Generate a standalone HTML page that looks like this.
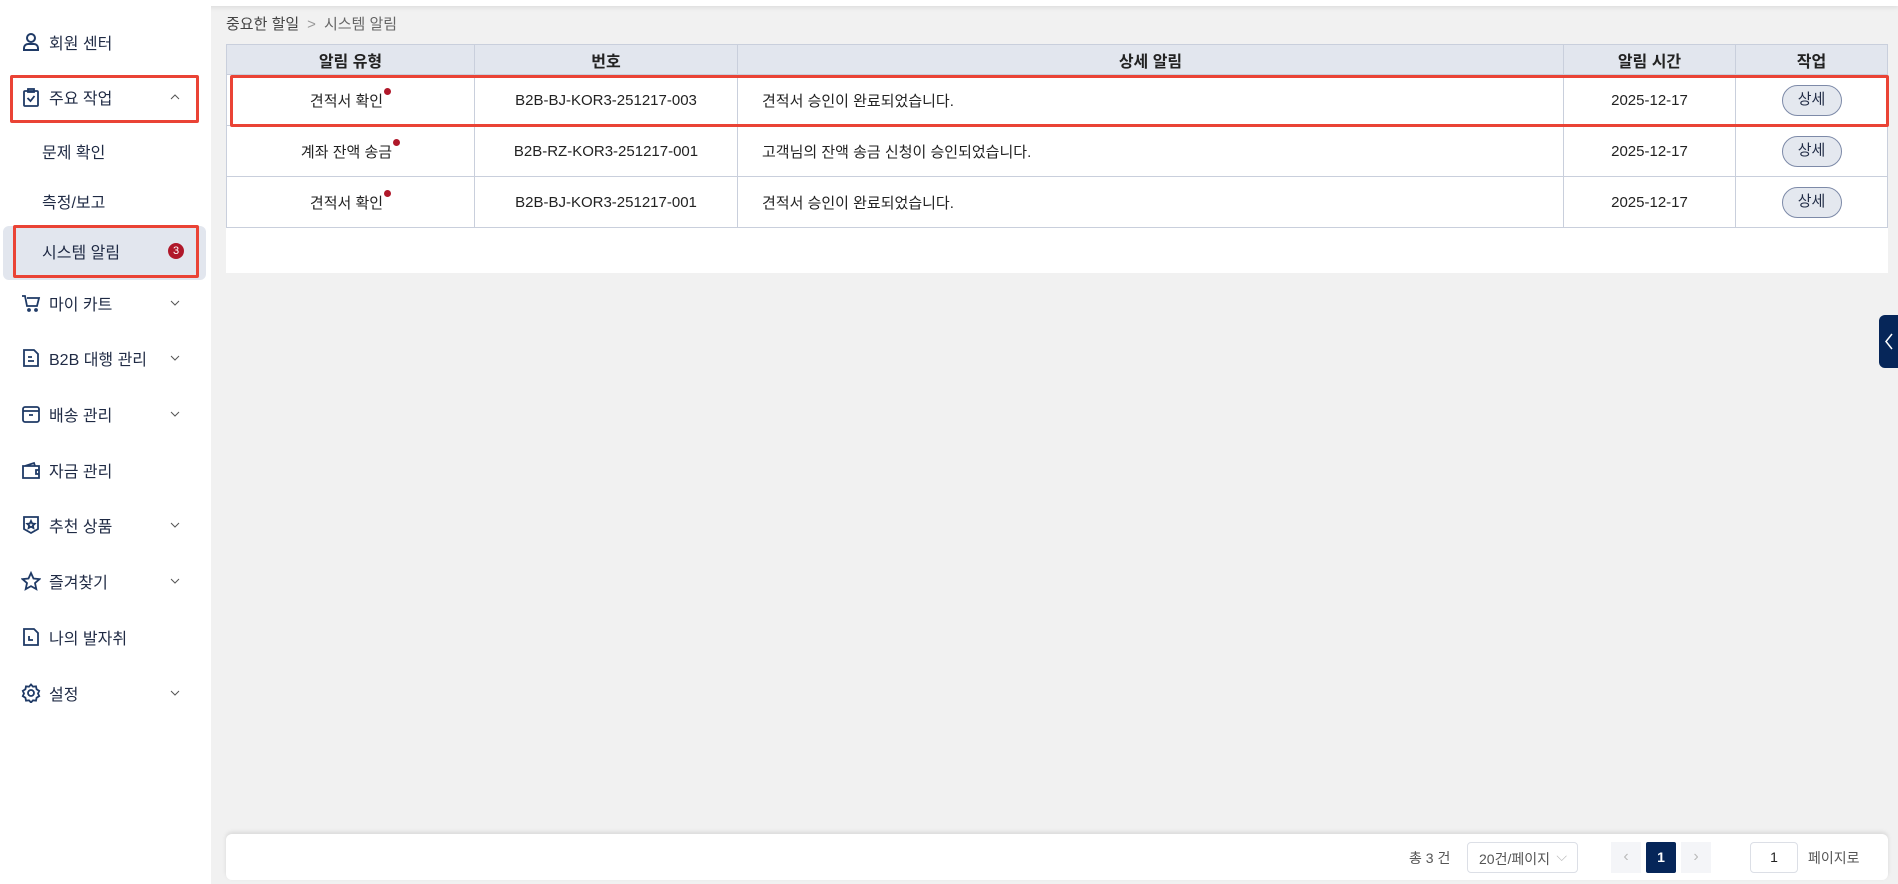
<!DOCTYPE html>
<html><head><meta charset="utf-8"><style>
*{margin:0;padding:0;box-sizing:border-box}
body{width:1898px;height:884px;overflow:hidden;background:#f1f1f1;font-family:"Liberation Sans","Noto Sans CJK KR",sans-serif;color:#222;position:relative;font-size:16px}
.top{position:absolute;left:0;top:0;width:1898px;height:6px;background:#fff;box-shadow:0 2px 4px rgba(0,0,0,.08)}
.side{position:absolute;left:0;top:6px;width:211px;height:878px;background:#fff}
.it{position:absolute;left:0;width:211px;height:40px;display:flex;align-items:center;font-size:16px;color:#1f2a44}
.it svg{position:absolute;left:21px;width:20px;height:20px}
.it .t{position:absolute;left:49px}
.it .ch{position:absolute;left:170px;width:10px;height:10px}
.sub .t{left:42px}
.box{position:absolute;border:3px solid #ea4335;border-radius:2px}
.bc{position:absolute;left:226px;top:13px;font-size:15px;color:#444}
.bc span{color:#999;margin:0 8px}
.bc b{font-weight:normal;color:#666}
.tbl{position:absolute;left:226px;top:44px;width:1662px;height:229px;background:#fff}
table{border-collapse:collapse;width:1662px;font-size:15px}
th{background:#e2e6ee;height:30px;font-weight:bold;border:1px solid #c9cfdc;font-size:16px}
td{height:51px;border:1px solid #c9cfdc;text-align:center;color:#222}
td.l{text-align:left;padding-left:24px}
.dot{display:inline-block;width:7px;height:7px;border-radius:50%;background:#b0182a;vertical-align:top;margin-top:-2px;margin-left:1px}
.btn{display:inline-block;width:60px;height:31px;border:1px solid #7d8aa8;border-radius:16px;background:#e4e8ef;line-height:28px;font-size:15px;color:#1f2a44}
.foot{position:absolute;left:226px;top:834px;width:1662px;height:46px;background:#fff;border-radius:6px;box-shadow:0 -2px 4px rgba(0,0,0,.1)}
.tab{position:absolute;left:1879px;top:315px;width:19px;height:53px;background:#062659;border-radius:6px 0 0 6px}
</style></head><body>
<div class="top"></div>
<div class="side">
<div class="it" style="top:16px"><svg viewBox="0 0 20 20" fill="none" stroke="#1f3a66" stroke-width="2"><circle cx="10" cy="6" r="4"/><path d="M3 18v-2a4 4 0 0 1 4-4h6a4 4 0 0 1 4 4v2z"/></svg><span class="t">회원 센터</span></div>
<div class="it" style="top:71px"><svg viewBox="0 0 20 20" fill="none" stroke="#1f3a66" stroke-width="1.8"><rect x="3" y="4" width="14" height="15" rx="1"/><rect x="7" y="2" width="6" height="3"/><path d="M6.5 11l3 3 4-5"/></svg><span class="t">주요 작업</span><svg class="ch" viewBox="0 0 10 10" fill="none" stroke="#555"><path d="M1 7l4-4 4 4"/></svg></div>
<div class="it sub" style="top:125px"><span class="t">문제 확인</span></div>
<div class="it sub" style="top:175px"><span class="t">측정/보고</span></div>
<div style="position:absolute;left:3px;top:220px;width:203px;height:54px;background:#e2e6ee;border-radius:6px"></div>
<div class="it sub" style="top:225px"><span class="t">시스템 알림</span><span style="position:absolute;left:168px;width:16px;height:16px;border-radius:50%;background:#b0182a;color:#fff;font-size:11px;text-align:center;line-height:16px">3</span></div>
<div class="it" style="top:277px"><svg viewBox="0 0 20 20" fill="none" stroke="#1f3a66" stroke-width="1.8"><path d="M1 3h3l2 10h10l2-8H6"/><circle cx="8" cy="17" r="1"/><circle cx="15" cy="17" r="1"/></svg><span class="t">마이 카트</span><svg class="ch" viewBox="0 0 10 10" fill="none" stroke="#555"><path d="M1 3l4 4 4-4"/></svg></div>
<div class="it" style="top:332px"><svg viewBox="0 0 20 20" fill="none" stroke="#1f3a66" stroke-width="1.8"><path d="M3 2h10l4 4v12H3z"/><path d="M7 9h4M7 13h6"/></svg><span class="t">B2B 대행 관리</span><svg class="ch" viewBox="0 0 10 10" fill="none" stroke="#555"><path d="M1 3l4 4 4-4"/></svg></div>
<div class="it" style="top:388px"><svg viewBox="0 0 20 20" fill="none" stroke="#1f3a66" stroke-width="1.8"><rect x="2" y="3" width="16" height="15" rx="2"/><path d="M2 7h16M8 11h4"/></svg><span class="t">배송 관리</span><svg class="ch" viewBox="0 0 10 10" fill="none" stroke="#555"><path d="M1 3l4 4 4-4"/></svg></div>
<div class="it" style="top:444px"><svg viewBox="0 0 20 20" fill="none" stroke="#1f3a66" stroke-width="1.8"><path d="M2 6h16v12H2zM4 6l9-3 1 3"/><path d="M18 10h-3v4h3"/></svg><span class="t">자금 관리</span></div>
<div class="it" style="top:499px"><svg viewBox="0 0 20 20" fill="none" stroke="#1f3a66" stroke-width="1.8"><path d="M3 2h14v12l-7 4-7-4z"/><path d="M10 6l1.2 2.5 2.5.3-1.8 1.7.5 2.5-2.4-1.3-2.4 1.3.5-2.5-1.8-1.7 2.5-.3z"/></svg><span class="t">추천 상품</span><svg class="ch" viewBox="0 0 10 10" fill="none" stroke="#555"><path d="M1 3l4 4 4-4"/></svg></div>
<div class="it" style="top:555px"><svg viewBox="0 0 20 20" fill="none" stroke="#1f3a66" stroke-width="1.8"><path d="M10 2l2.5 5.5 6 .6-4.5 4 1.3 6-5.3-3-5.3 3 1.3-6-4.5-4 6-.6z"/></svg><span class="t">즐겨찾기</span><svg class="ch" viewBox="0 0 10 10" fill="none" stroke="#555"><path d="M1 3l4 4 4-4"/></svg></div>
<div class="it" style="top:611px"><svg viewBox="0 0 20 20" fill="none" stroke="#1f3a66" stroke-width="1.8"><path d="M3 2h10l4 4v12H3z"/><path d="M8 9v4h4"/></svg><span class="t">나의 발자취</span></div>
<div class="it" style="top:667px"><svg viewBox="0 0 20 20" fill="none" stroke="#1f3a66" stroke-width="1.8"><circle cx="10" cy="10" r="3"/><path d="M10 1.5l2 2.2 3-.3.6 2.9 2.6 1.6-1.2 2.6 1.2 2.6-2.6 1.6-.6 2.9-3-.3-2 2.2-2-2.2-3 .3-.6-2.9-2.6-1.6 1.2-2.6-1.2-2.6 2.6-1.6.6-2.9 3 .3z"/></svg><span class="t">설정</span><svg class="ch" viewBox="0 0 10 10" fill="none" stroke="#555"><path d="M1 3l4 4 4-4"/></svg></div>
</div>
<div class="box" style="left:10px;top:75px;width:189px;height:48px"></div>
<div class="box" style="left:13px;top:225px;width:186px;height:53px"></div>
<div class="bc">중요한 할일<span>&gt;</span><b>시스템 알림</b></div>
<div class="tbl"><table>
<tr><th style="width:248px">알림 유형</th><th style="width:263px">번호</th><th style="width:826px">상세 알림</th><th style="width:172px">알림 시간</th><th>작업</th></tr>
<tr><td>견적서 확인<span class="dot"></span></td><td>B2B-BJ-KOR3-251217-003</td><td class="l">견적서 승인이 완료되었습니다.</td><td>2025-12-17</td><td><span class="btn">상세</span></td></tr>
<tr><td>계좌 잔액 송금<span class="dot"></span></td><td>B2B-RZ-KOR3-251217-001</td><td class="l">고객님의 잔액 송금 신청이 승인되었습니다.</td><td>2025-12-17</td><td><span class="btn">상세</span></td></tr>
<tr><td>견적서 확인<span class="dot"></span></td><td>B2B-BJ-KOR3-251217-001</td><td class="l">견적서 승인이 완료되었습니다.</td><td>2025-12-17</td><td><span class="btn">상세</span></td></tr>
</table></div>
<div class="box" style="left:230px;top:75px;width:1659px;height:52px"></div>
<div class="foot">
<span style="position:absolute;left:1183px;top:14px;font-size:14px;color:#555">총 3 건</span>
<div style="position:absolute;left:1241px;top:8px;width:111px;height:31px;border:1px solid #dcdfe6;border-radius:4px;font-size:14px;color:#555;padding:6px 0 0 11px">20건/페이지<span style="position:absolute;right:10px;top:5px;color:#bbb">⌵</span></div>
<div style="position:absolute;left:1385px;top:8px;width:30px;height:31px;background:#f4f5f8;color:#bbb;text-align:center;line-height:30px">‹</div>
<div style="position:absolute;left:1420px;top:8px;width:30px;height:31px;background:#062659;color:#fff;text-align:center;line-height:31px;font-weight:bold;font-size:14px;border-radius:2px">1</div>
<div style="position:absolute;left:1455px;top:8px;width:30px;height:31px;background:#f4f5f8;color:#bbb;text-align:center;line-height:30px">›</div>
<div style="position:absolute;left:1524px;top:8px;width:48px;height:31px;border:1px solid #dcdfe6;border-radius:4px;text-align:center;line-height:29px;font-size:14px">1</div>
<span style="position:absolute;left:1582px;top:14px;font-size:14px;color:#555">페이지로</span>
</div>
<div class="tab"><svg width="19" height="53" viewBox="0 0 19 53" fill="none" stroke="#fff" stroke-width="1.5"><path d="M13 19l-6 7.5 6 7.5"/></svg></div>
</body></html>
